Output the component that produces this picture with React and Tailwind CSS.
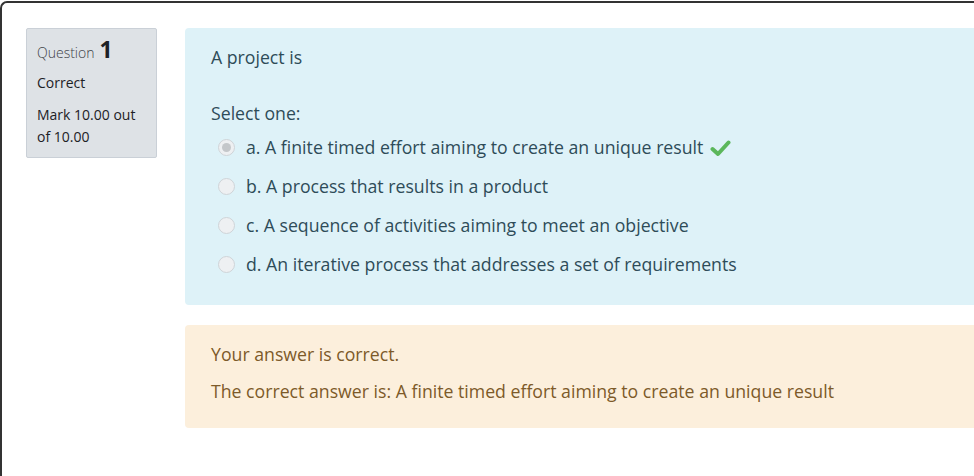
import React from "react";

const options = [
  { label: "a. A finite timed effort aiming to create an unique result", checked: true },
  { label: "b. A process that results in a product" },
  { label: "c. A sequence of activities aiming to meet an objective" },
  { label: "d. An iterative process that addresses a set of requirements" },
];

function Radio({ checked }) {
  return (
    <span className="flex h-[17px] w-[17px] shrink-0 items-center justify-center rounded-full border border-[#cfd4d8] bg-[#eef0f2]">
      {checked && <span className="h-[9px] w-[9px] rounded-full bg-[#c4c7ca]" />}
    </span>
  );
}

export default function App() {
  return (
    <div className="h-[476px] w-[974px] overflow-hidden bg-white pt-[1px]" style={{ fontFamily: "'Open Sans', 'Liberation Sans', sans-serif" }}>
      <div className="h-[600px] w-[1000px] rounded-tl-[7px] border-l-2 border-t-2 border-[#333]">
        <div className="flex gap-[28px] pl-[24px] pt-[25px]">
          <div className="h-[130px] w-[131px] shrink-0 rounded-[2px] border border-[#cad0d7] bg-[#dee2e6] px-[10px] pt-[8px] text-[14px] leading-[20px] text-[#1d2125]">
            <div className="flex items-baseline">
              <span className="font-light text-[#3d4146]">Question</span>
              <span className="ml-[5px] text-[23px] font-bold leading-[24px]">1</span>
            </div>
            <div className="mt-[10px]">Correct</div>
            <div className="mt-[11px] leading-[22px]">Mark 10.00 out of 10.00</div>
          </div>
          <div className="flex flex-col gap-[20px]">
            <div className="h-[277px] w-[800px] rounded-[4px] bg-[#def2f8] pl-[26px] pt-[15px] text-[17.7px] text-[#2e4c58]">
              <div className="leading-[28px]">A project is</div>
              <div className="mt-[28px] leading-[28px]">Select one:</div>
              <div className="mt-[1px] flex flex-col">
                {options.map((o, i) => (
                  <div key={i} className="flex h-[39px] items-center pl-[7px]">
                    <Radio checked={o.checked} />
                    <span className="ml-[11px]">{o.label}</span>
                    {o.checked && (
                      <svg className="ml-[7px]" width="21" height="18" viewBox="0 0 21 18">
                        <path d="M2.5 10 L8 15 L18.5 3.5" fill="none" stroke="#5bb75b" strokeWidth="4" strokeLinejoin="round" strokeLinecap="round" />
                      </svg>
                    )}
                  </div>
                ))}
              </div>
            </div>
            <div className="h-[103px] w-[800px] rounded-[4px] bg-[#fcefdc] pl-[26px] pt-[15px] text-[17.7px] leading-[28px] text-[#7d5a29]">
              <div>Your answer is correct.</div>
              <div className="mt-[9px]">The correct answer is: A finite timed effort aiming to create an unique result</div>
            </div>
          </div>
        </div>
      </div>
    </div>
  );
}
